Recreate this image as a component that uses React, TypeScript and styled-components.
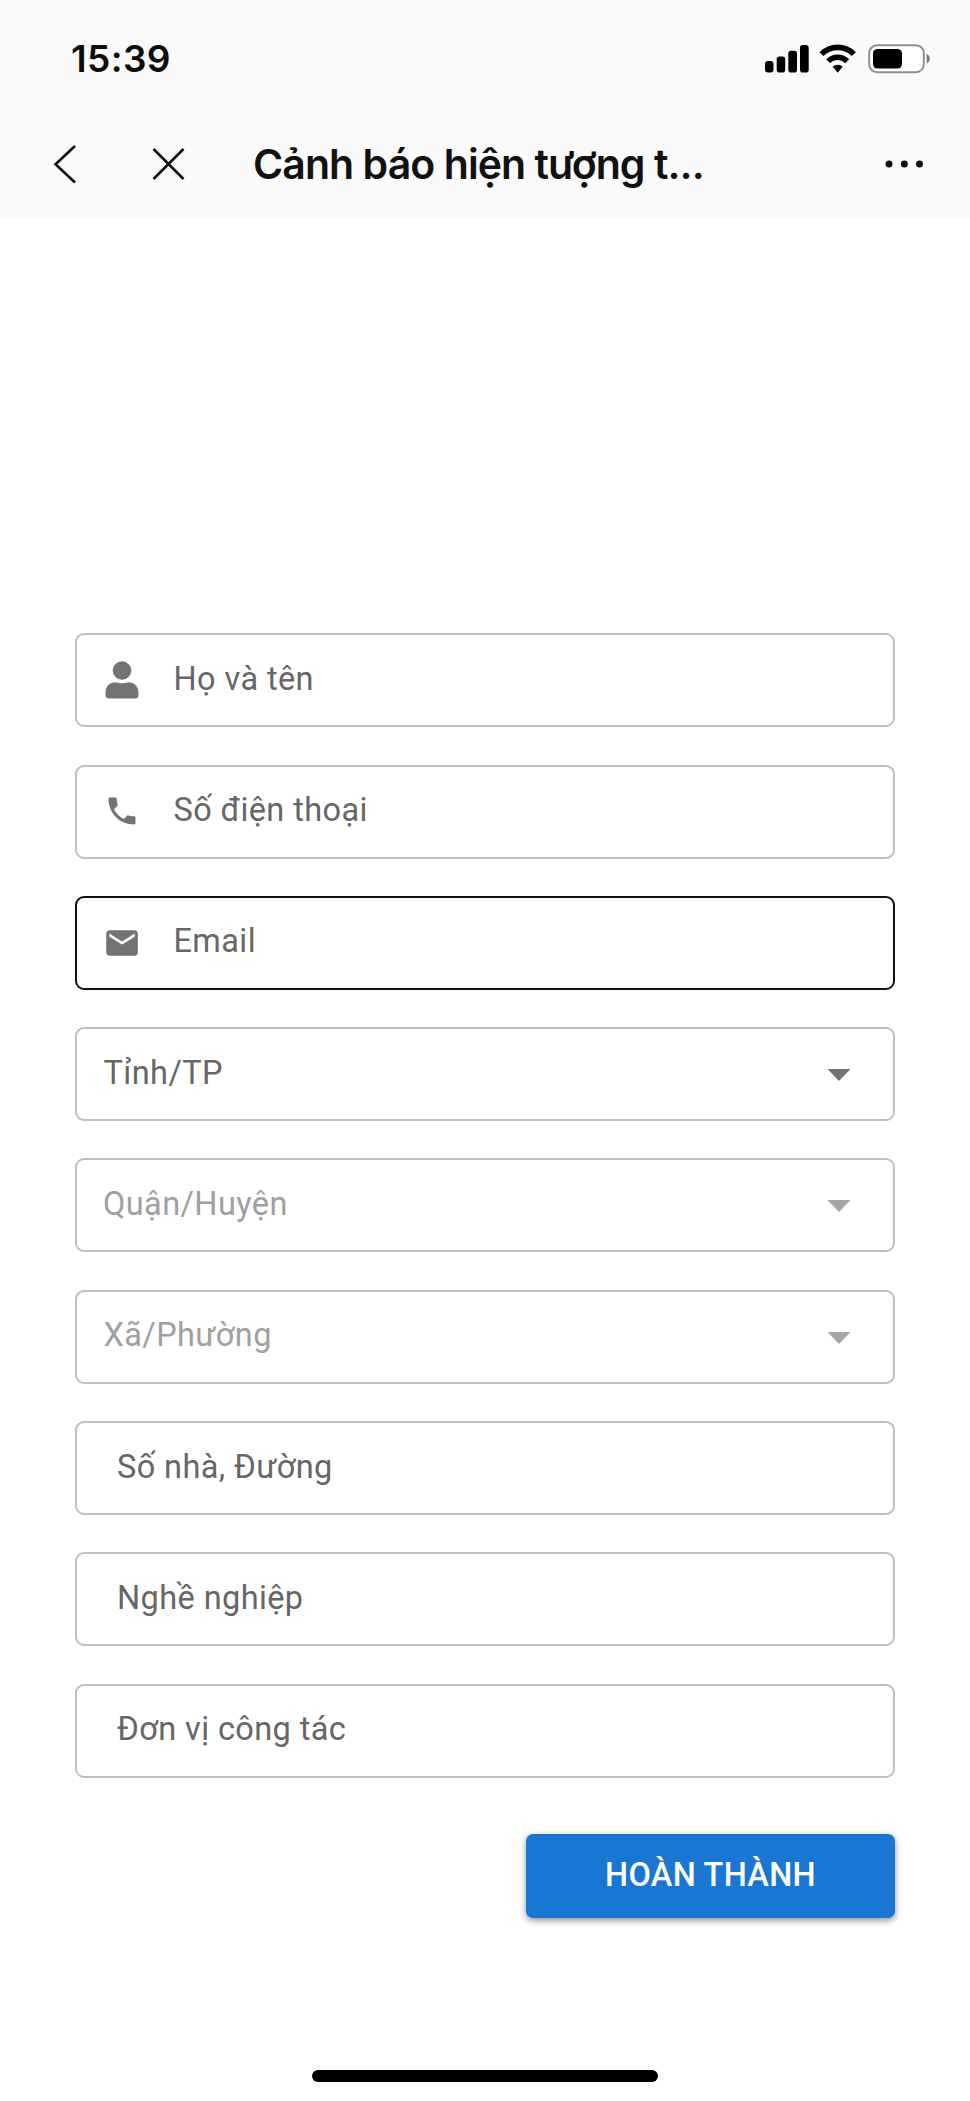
import React from "react";
import styled, { createGlobalStyle } from "styled-components";

const GlobalStyle = createGlobalStyle`
  * { box-sizing: border-box; }
  body { margin: 0; background: #fff; }
`;

const Screen = styled.div`
  width: 970px;
  height: 2101px;
  display: flex;
  flex-direction: column;
  background: #fff;
  font-family: Roboto, "Noto Sans", sans-serif;
  overflow: hidden;
`;

const Header = styled.header`
  height: 217px;
  flex: none;
  background: #fafafa;
  border-bottom: 2px solid #f8f8f8;
  font-family: Inter, "Noto Sans", sans-serif;
`;

const StatusBar = styled.div`
  height: 117px;
  display: flex;
  align-items: center;
  justify-content: space-between;
  padding: 0 40px 0 71px;
`;

const Time = styled.span`
  font-size: 37px;
  line-height: 44px;
  font-weight: 600;
  letter-spacing: 0.4px;
  color: #0c0c0c;
`;

const StatusIcons = styled.div`
  display: flex;
  align-items: center;
`;

const NavBar = styled.nav`
  height: 98px;
  display: flex;
  align-items: center;
  padding: 0 44px 4px 52px;
`;

const NavButton = styled.button<{ $gap?: number }>`
  display: flex;
  padding: 0;
  border: 0;
  background: none;
  margin-right: ${({ $gap = 0 }) => $gap}px;
`;

const Title = styled.h1`
  flex: 1;
  margin: 0;
  font-size: 41px;
  line-height: 50px;
  font-weight: 600;
  letter-spacing: -0.93px;
  color: #111;
  white-space: nowrap;
`;

const Form = styled.form`
  display: flex;
  flex-direction: column;
  gap: 37.3px;
  padding: 416.3px 75px 0;
`;

const Field = styled.div<{ $active?: boolean; $inset?: number }>`
  height: 94px;
  display: flex;
  align-items: center;
  border: 2px solid ${({ $active }) => ($active ? "#111" : "#bfbfbf")};
  border-radius: 9px;
  padding: 0 40px 0 ${({ $inset = 27 }) => $inset}px;
  background: #fff;
`;

const IconSlot = styled.span`
  width: 69.5px;
  flex: none;
  display: flex;
  color: #737373;
`;

const Label = styled.span<{ $disabled?: boolean }>`
  flex: 1;
  font-size: 32.5px;
  line-height: 38px;
  letter-spacing: 0.4px;
  padding-bottom: 3px;
  color: ${({ $disabled }) => ($disabled ? "#a0a0a0" : "#666")};
`;

const Caret = styled.svg<{ $disabled?: boolean }>`
  width: 24px;
  height: 12px;
  margin: 2px 2px 0 0;
  fill: ${({ $disabled }) => ($disabled ? "#a6a6a6" : "#737373")};
`;

const Submit = styled.button`
  align-self: flex-end;
  width: 369px;
  height: 84px;
  margin-top: 18.7px;
  border: 0;
  border-radius: 7px;
  padding: 0 0 2px;
  background: #1976d2;
  color: #fff;
  font: 500 32.5px/40px Roboto, "Noto Sans", sans-serif;
  letter-spacing: 0.3px;
  box-shadow: 0 3px 6px rgba(0, 0, 0, 0.32), 0 1px 8px rgba(0, 0, 0, 0.12);
`;

const HomeIndicator = styled.div`
  width: 346px;
  height: 12px;
  margin: auto auto 19px 312px;
  flex: none;
  border-radius: 6px;
  background: #000;
`;

const SignalIcon = () => (
  <svg width="54" height="36" viewBox="0 0 54 36">
    <rect x="0" y="20" width="8.5" height="11.5" rx="3" />
    <rect x="11.7" y="15.5" width="8.5" height="16" rx="2.8" />
    <rect x="23.3" y="9.7" width="8.7" height="21.8" rx="2.8" />
    <rect x="35" y="4" width="8.7" height="27.5" rx="2.8" />
  </svg>
);

const WifiIcon = () => (
  <svg width="49" height="36" viewBox="0 0 49 36">
    <g fill="none" stroke="#000" strokeWidth="5.6">
      <path d="M2.5 13.1a22.8 22.8 0 0 1 32.4 0" />
      <path d="M9.2 20.2a13.5 13.5 0 0 1 19 0" />
    </g>
    <path d="M13.7 25.6a7.4 7.4 0 0 1 10 0L18.7 31.7z" />
  </svg>
);

const BatteryIcon = () => (
  <svg width="62" height="36" viewBox="0 0 62 36">
    <rect x="1.2" y="4.2" width="54.6" height="27" rx="8" fill="#fff" stroke="#8f8f8f" strokeWidth="2" />
    <rect x="5" y="8" width="29" height="19.5" rx="4.5" />
    <path d="M58.7 13c4 1.4 4 8 0 9.4z" fill="#777" />
  </svg>
);

const BackIcon = () => (
  <svg width="26" height="40" viewBox="0 0 26 40" fill="none" stroke="#111" strokeWidth="2.6">
    <path d="M23 2 3.5 20.3 23 38.5" />
  </svg>
);

const CloseIcon = () => (
  <svg width="36" height="36" viewBox="0 0 36 36" stroke="#111" strokeWidth="2.6">
    <path d="m3.5 3 30 30M33.5 3 3.5 33" />
  </svg>
);

const MoreIcon = () => (
  <svg width="42" height="12" viewBox="0 0 42 12" fill="#111">
    <circle cx="5" cy="6" r="3.5" />
    <circle cx="20.3" cy="6" r="3.5" />
    <circle cx="35.5" cy="6" r="3.5" />
  </svg>
);

const PersonIcon = () => (
  <svg width="38" height="42" viewBox="0 0 38 42" fill="currentColor">
    <circle cx="18" cy="11.5" r="9.3" />
    <path d="M1.5 36V33.5C1.5 27 6 23.2 11.5 23.2Q18 25.4 24.5 23.2C30 23.2 34.5 27 34.5 33.5V36Q34.5 39.5 31 39.5H5Q1.5 39.5 1.5 36Z" />
  </svg>
);

const PhoneIcon = () => (
  <svg width="38" height="38" viewBox="-1.5 -1.5 25.33 25.33" fill="currentColor">
    <path d="M5.12 9.29c1.44 2.83 3.76 5.14 6.59 6.59l2.2-2.2c.27-.27.67-.36 1.02-.24 1.12.37 2.33.57 3.57.57.55 0 1 .45 1 1V18.5c0 .55-.45 1-1 1C9.11 19.5 1.5 11.89 1.5 2.5c0-.55.45-1 1-1H6c.55 0 1 .45 1 1 0 1.25.2 2.45.57 3.57.11.35.03.74-.25 1.02z" />
  </svg>
);

const MailIcon = () => (
  <svg width="38" height="38" viewBox="0.6 0 24 24" fill="currentColor">
    <path d="M20 4H4c-1.1 0-1.99.9-1.99 2L2 18c0 1.1.9 2 2 2h16c1.1 0 2-.9 2-2V6c0-1.1-.9-2-2-2zm0 4-8 5-8-5V6l8 5 8-5z" />
  </svg>
);

type FieldSpec = {
  label: string;
  icon?: React.ReactNode;
  active?: boolean;
  select?: boolean;
  disabled?: boolean;
  inset?: number;
};

const fields: FieldSpec[] = [
  { label: "Họ và tên", icon: <PersonIcon /> },
  { label: "Số điện thoại", icon: <PhoneIcon /> },
  { label: "Email", icon: <MailIcon />, active: true },
  { label: "Tỉnh/TP", select: true, inset: 26.5 },
  { label: "Quận/Huyện", select: true, disabled: true, inset: 26 },
  { label: "Xã/Phường", select: true, disabled: true, inset: 26.5 },
  { label: "Số nhà, Đường", inset: 40 },
  { label: "Nghề nghiệp", inset: 40 },
  { label: "Đơn vị công tác", inset: 40 },
];

export default function App() {
  return (
    <Screen>
      <GlobalStyle />
      <Header>
        <StatusBar>
          <Time>15:39</Time>
          <StatusIcons>
            <SignalIcon />
            <WifiIcon />
            <BatteryIcon />
          </StatusIcons>
        </StatusBar>
        <NavBar>
          <NavButton type="button" $gap={72} aria-label="Quay lại">
            <BackIcon />
          </NavButton>
          <NavButton type="button" $gap={67} aria-label="Đóng">
            <CloseIcon />
          </NavButton>
          <Title>Cảnh báo hiện tượng t...</Title>
          <NavButton type="button" aria-label="Thêm">
            <MoreIcon />
          </NavButton>
        </NavBar>
      </Header>
      <Form>
        {fields.map((f) => (
          <Field key={f.label} $active={f.active} $inset={f.inset}>
            {f.icon && <IconSlot>{f.icon}</IconSlot>}
            <Label $disabled={f.disabled}>{f.label}</Label>
            {f.select && (
              <Caret viewBox="0 0 24 12" $disabled={f.disabled}>
                <path d="M0.5 0H23.5L12 12Z" />
              </Caret>
            )}
          </Field>
        ))}
        <Submit type="button">HOÀN THÀNH</Submit>
      </Form>
      <HomeIndicator />
    </Screen>
  );
}
